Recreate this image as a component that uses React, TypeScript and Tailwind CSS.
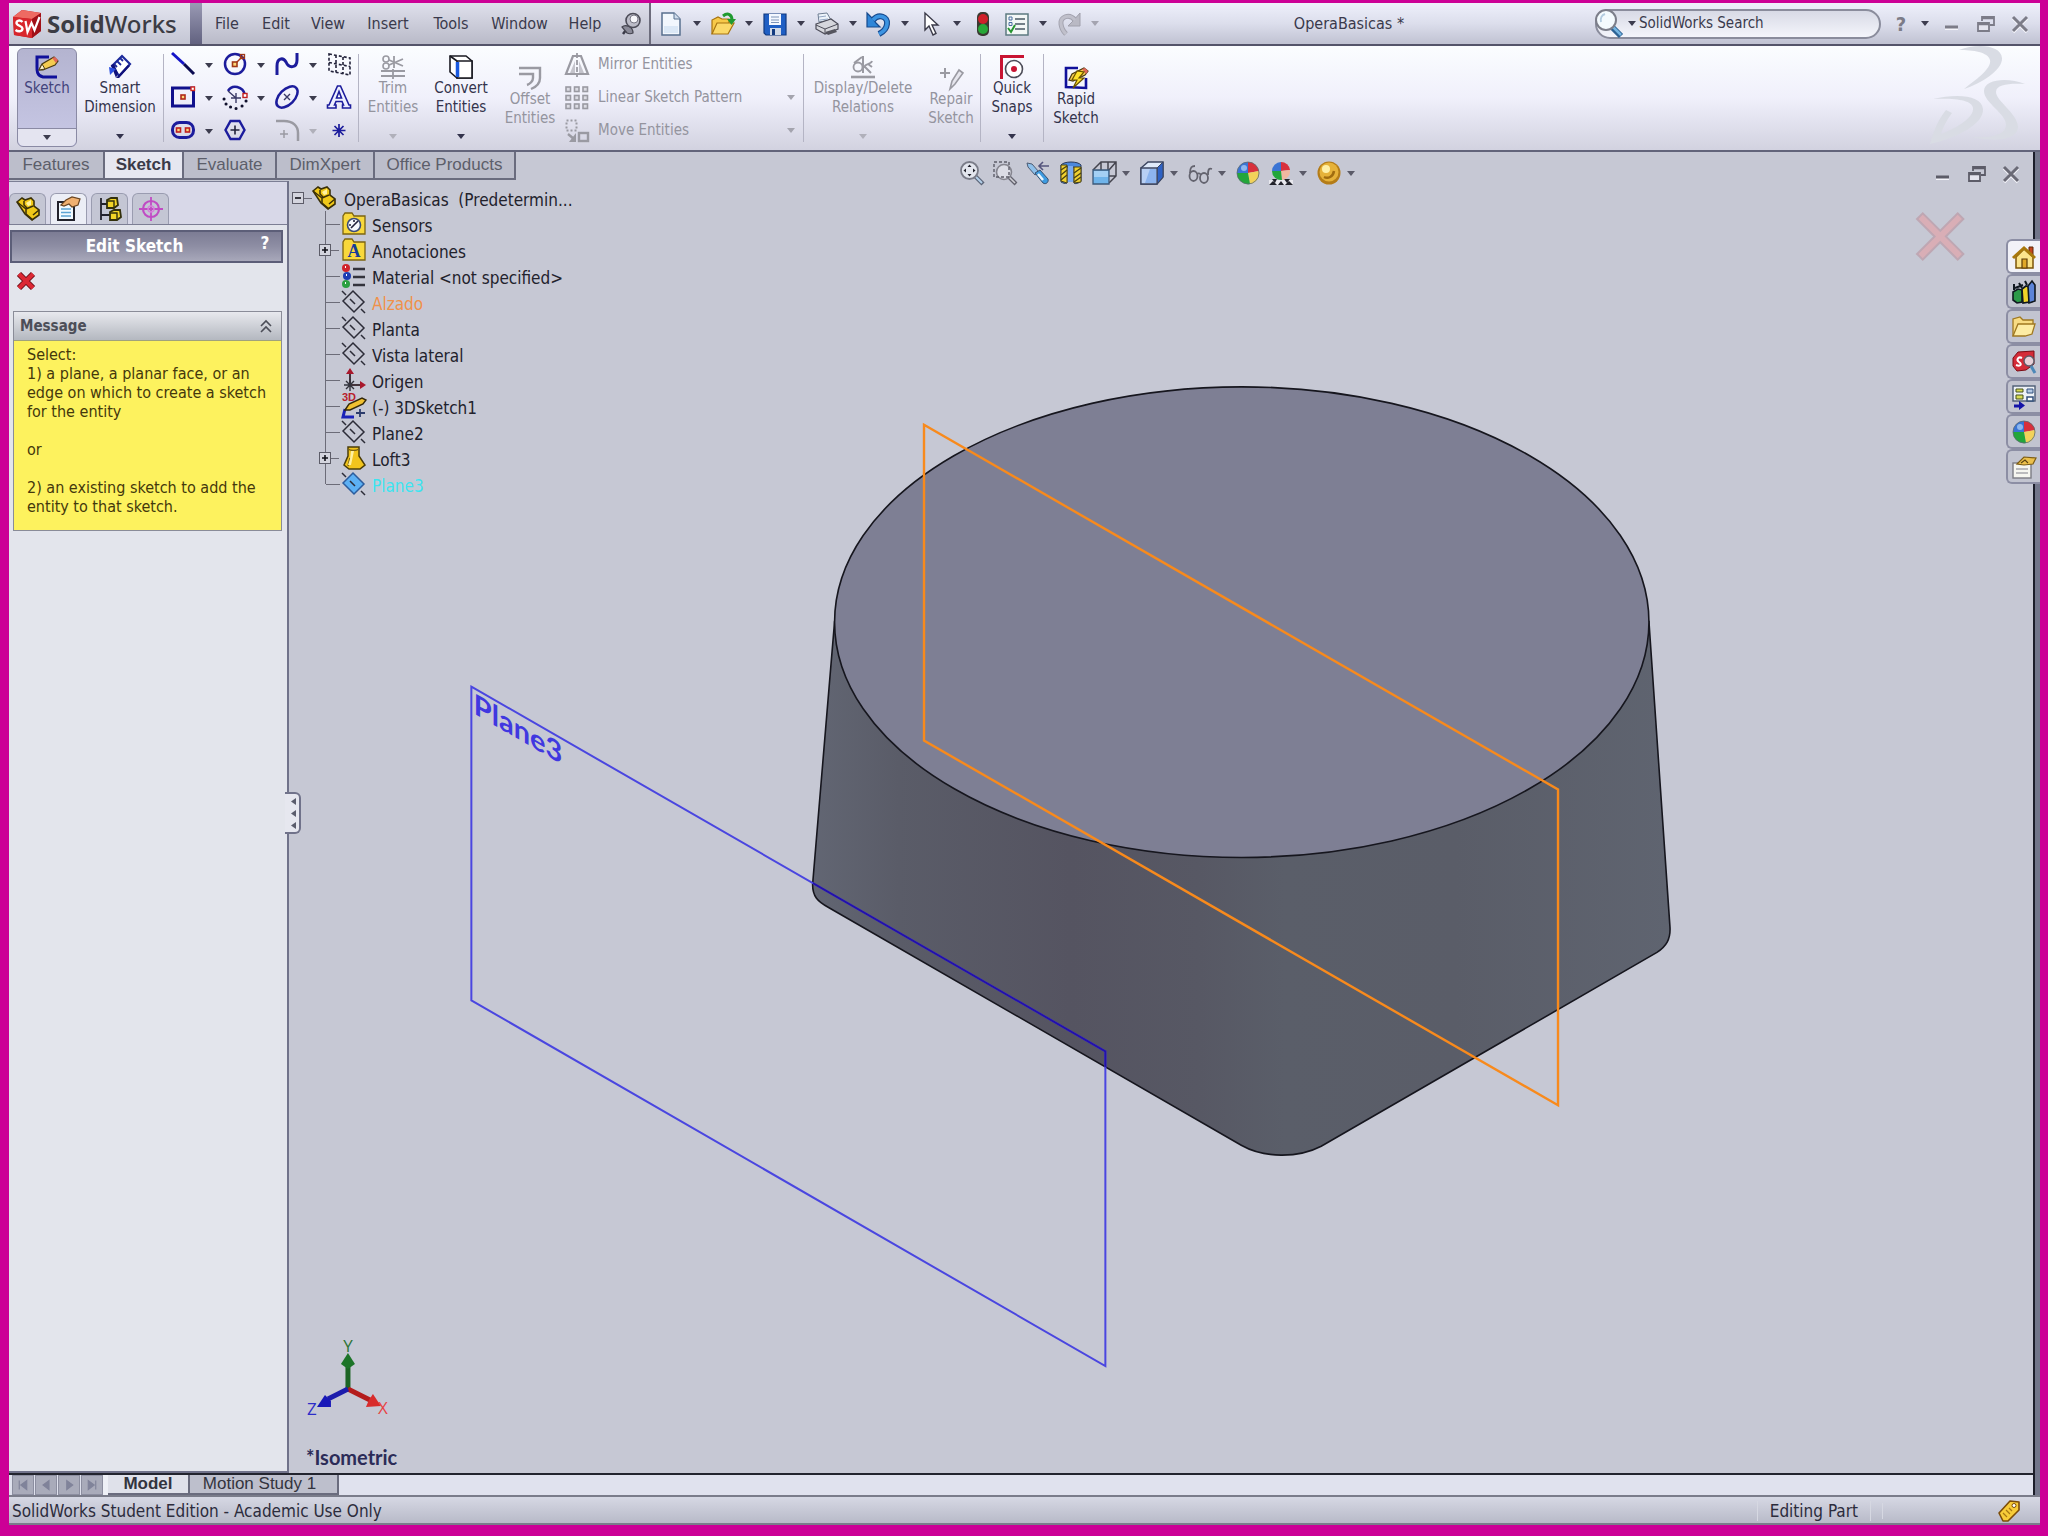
import React from 'react';
import type { ReactNode } from 'react';

const NAVY = '#1c1c9c';
const GREY = '#9a9aa2';

function Svg({ children, size = 'w-6 h-6', box = '0 0 24 24' }: { children: ReactNode; size?: string; box?: string }) {
  return (
    <svg viewBox={box} className={`${size} shrink-0 overflow-visible`} fill="none" aria-hidden="true">
      {children}
    </svg>
  );
}

function Caret({ tone = '#3c3c4e' }: { tone?: string }) {
  return (
    <Svg size="w-2 h-[5px]" box="0 0 8 5">
      <path d="M0 0h8L4 5z" fill={tone} />
    </Svg>
  );
}

/* ---------- title bar icons ---------- */

const CubeLogo = () => (
  <Svg size="w-[30px] h-[30px]" box="0 0 30 30">
    <path d="M1 8 10 1l19 3v18l-9 7L2 26z" fill="#c01820" />
    <path d="M1 8 10 1l19 3-9 6z" fill="#ee6a62" />
    <path d="M20 10l9-6v18l-9 7z" fill="#a01018" />
    <path d="M1 8l19 2v19L2 26z" fill="#d8262c" />
    <path d="M10.500 13c-2.500-2.500-6-1.500-6 1s6 3 6 5.500-3.500 4-7 1.500" stroke="#fff" strokeWidth="2.400" />
    <path d="M13.500 12l2 11 4-9 3 7 5-13" stroke="#fff" strokeWidth="2.200" />
  </Svg>
);

const PinIcon = () => (
  <Svg size="w-5 h-6" box="0 0 20 24">
    <path d="M2 22l6-8" stroke="#3a3a48" strokeWidth="2.500" />
    <path d="M1 15c3-3 11-1 11 6-2 1-4 1-6 0z" fill="#8a8a98" stroke="#44444f" strokeWidth="1.200" />
    <circle cx="12" cy="8.500" r="7" fill="#bcbcc8" stroke="#4c4c58" strokeWidth="1.600" />
    <circle cx="13" cy="7" r="4" fill="#f6f6fa" stroke="#777784" />
  </Svg>
);

const NewIcon = () => (
  <Svg>
    <path d="M3 1h12l6 6v16H3z" fill="#f2f7fd" stroke="#58708f" strokeWidth="1.500" />
    <path d="M15 1v6h6" fill="#cfdcec" stroke="#58708f" />
    <path d="M5 14h14v7H5z" fill="#dbe8f6" />
  </Svg>
);

const OpenIcon = () => (
  <Svg>
    <path d="M1 22V8l6-3 4 2h7v4" fill="#f7c948" stroke="#a87410" strokeWidth="1.200" />
    <path d="M1 22l5-11h17l-6 11z" fill="#fbd968" stroke="#a87410" strokeWidth="1.200" />
    <path d="M12 4c5-4 9-1 9 4" stroke="#1f9a30" strokeWidth="3" />
    <path d="M16 7h9l-4.500 6z" fill="#1f9a30" />
  </Svg>
);

const SaveIcon = () => (
  <Svg>
    <path d="M1 2h22v21H3l-2-2z" fill="#1f5fc4" stroke="#123a80" strokeWidth="1.200" />
    <path d="M6 2h12v11H6z" fill="#f4f8ff" />
    <path d="M8 5h8M8 8h8M8 10.500h8" stroke="#7c94b8" />
    <path d="M7 16h11v7H7z" fill="#cfd8e6" />
    <path d="M9 17h3v6H9z" fill="#123a80" />
  </Svg>
);

const PrintIcon = () => (
  <Svg>
    <path d="M4 10L3 2l9-1 4 7z" fill="#eef4fb" stroke="#6f7f94" />
    <path d="M1 12l15-5 7 5v5l-13 5-9-5z" fill="#d5d6dc" stroke="#4c4c58" strokeWidth="1.200" />
    <path d="M1 13l9 4 13-5M10 17v5" stroke="#4c4c58" />
    <path d="M10 20l10-3 2 3-9 3z" fill="#55555f" />
    <path d="M4 5l7-1M5 8l8-1" stroke="#93a7c4" />
  </Svg>
);

const UndoIcon = () => (
  <Svg>
    <path d="M6 8c6-7 15-3 14 4-.5 5-4 8-8 10" stroke="#174a8e" strokeWidth="6" />
    <path d="M0 1v14h13L9 11 6 7z" fill="#2f86d8" stroke="#174a8e" strokeWidth="1.200" />
    <path d="M6 8c6-7 15-3 14 4-.5 5-4 8-8 10" stroke="#3c94e2" strokeWidth="3.600" />
  </Svg>
);

const RedoIcon = () => (
  <Svg>
    <path d="M18 8C12 1 3 5 4 12c.5 5 3 8 5 10" stroke="#a3a3af" strokeWidth="5" />
    <path d="M23 1v13H11l5-5z" fill="#b9b9c4" stroke="#a0a0ac" />
    <path d="M18 8C12 1 3 5 4 12c.5 5 3 8 5 10" stroke="#c0c0cb" strokeWidth="3" />
  </Svg>
);

const CursorIcon = () => (
  <Svg>
    <path d="M6 1v17l4-4 4 9 3-1.500-4-8.500h6z" fill="#fff" stroke="#3a3a48" strokeWidth="1.400" />
  </Svg>
);

const LightIcon = () => (
  <Svg>
    <rect x="6" y="0" width="12" height="24" rx="5" fill="#3a3a32" />
    <circle cx="12" cy="7" r="5" fill="#d0202a" />
    <circle cx="12" cy="17" r="5" fill="#28a838" />
  </Svg>
);

const ListIcon = () => (
  <Svg>
    <rect x="1" y="2" width="22" height="21" fill="#f3f7f6" stroke="#5c7a80" strokeWidth="1.500" />
    <path d="M10 7h10M10 12h10M10 17h10" stroke="#4a5a64" strokeWidth="1.500" />
    <path d="M4 5h3v3H4zM4 10.500h3v3H4z" stroke="#4a6ea0" />
    <path d="M3 16l3 4 4-7" stroke="#25952f" strokeWidth="2" />
  </Svg>
);

const MinIcon = ({ tone = '#7c7c88' }: { tone?: string }) => (
  <Svg size="w-[18px] h-[18px]" box="0 0 18 18">
    <path d="M2 13h13" stroke="#f4f4fa" strokeWidth="4" />
    <path d="M2 12h13" stroke={tone} strokeWidth="3" />
  </Svg>
);

const RestoreIcon = ({ tone = '#7c7c88' }: { tone?: string }) => (
  <Svg size="w-[18px] h-[18px]" box="0 0 18 18">
    <path d="M5 6V2h12v8h-4" stroke={tone} strokeWidth="1.800" />
    <path d="M5 3h12" stroke={tone} strokeWidth="2.500" />
    <path d="M1 8h11v8H1z" fill="#e4e4ee" stroke={tone} strokeWidth="1.800" />
    <path d="M1 9h11" stroke={tone} strokeWidth="2.500" />
  </Svg>
);

const CloseIcon = ({ tone = '#7c7c88' }: { tone?: string }) => (
  <Svg size="w-[18px] h-[18px]" box="0 0 18 18">
    <path d="M2 3l14 14M16 3L2 17" stroke="#f4f4fa" strokeWidth="3.500" />
    <path d="M2 2l14 14M16 2L2 16" stroke={tone} strokeWidth="3" />
  </Svg>
);

/* ---------- sketch tool icons ---------- */

const SketchIcon = () => (
  <Svg>
    <path d="M14 2H2v8c0 4-1 11 6 12h14" stroke="#10109a" strokeWidth="3" />
    <path d="M4 15l3-6 12-7 4 4-3 4-12 5z" fill="#f4cc50" stroke="#4a3a10" strokeWidth="1.200" />
    <path d="M4 15l3-6 3 5z" fill="#fff4d0" stroke="#4a3a10" />
    <path d="M17 3l4 5 2-3-3-3z" fill="#e0685a" />
  </Svg>
);

const DimensionIcon = () => (
  <Svg>
    <path d="M4 11L14 1l8 8-11 12z" fill="#fff" stroke="#1c2a9c" strokeWidth="2.200" />
    <path d="M12 3l3 3M9 6l4 4M6 9l3 3" stroke="#1c2a9c" strokeWidth="1.800" />
    <path d="M3 10l3-1 4 9-2 5z" fill="#10107a" />
    <path d="M1 12l7 2-6 6z" fill="#2c50e0" />
    <path d="M8 23l12-13 2 1-11 12z" fill="#10107a" />
  </Svg>
);

const LineIcon = () => (
  <Svg>
    <path d="M1 1l12 11" stroke="#1414c8" strokeWidth="3" />
    <path d="M13 12l10 10" stroke="#0a0a50" strokeWidth="3" />
  </Svg>
);

const CircleIcon = () => (
  <Svg>
    <circle cx="12" cy="12" r="10" stroke={NAVY} strokeWidth="2.500" />
    <path d="M12 12l8-8" stroke="#a03818" strokeWidth="1.500" />
    <rect x="9.500" y="10" width="4.500" height="4.500" fill="#fbd77a" stroke="#a03818" strokeWidth="1.600" />
    <rect x="17.500" y="2.500" width="4" height="4" stroke="#a03818" strokeWidth="1.300" />
  </Svg>
);

const SplineIcon = () => (
  <Svg>
    <path d="M2 23V14C2 6 8 5 11 10c3 7 11 6 11-2V1" stroke={NAVY} strokeWidth="3" />
  </Svg>
);

const PlaneGridIcon = () => (
  <Svg>
    <path d="M2 2l21 4v17L2 19zM2 10.500l21 4M9 3v17M16 5v17" stroke="#22223a" strokeWidth="1.600" strokeDasharray="3 2" />
  </Svg>
);

const RectIcon = () => (
  <Svg>
    <rect x="1.500" y="3" width="21" height="18" stroke="#10108c" strokeWidth="3" />
    <rect x="10" y="10" width="4" height="4" fill="#fbd77a" stroke="#b02818" strokeWidth="1.600" />
    <rect x="20" y="2" width="3.500" height="3.500" fill="#fff" stroke="#d02820" strokeWidth="1.400" />
  </Svg>
);

const ArcIcon = () => (
  <Svg>
    <path d="M5 6C9-1 20 1 22 10" stroke={NAVY} strokeWidth="2.600" />
    <path d="M5 6l8 7M13 8v10M8 13h10" stroke="#3a3a66" strokeWidth="1.400" />
    <path d="M1 14h.1M3 19h.1M7.500 22h.1M13 23.500h.1M19 21h.1M23 16h.1" stroke="#10102c" strokeWidth="3" strokeLinecap="round" />
    <rect x="20" y="8.500" width="4" height="4" fill="#fff" stroke="#c02020" strokeWidth="1.400" />
  </Svg>
);

const EllipseIcon = () => (
  <Svg>
    <ellipse cx="12" cy="12" rx="13" ry="7.500" transform="rotate(-45 12 12)" stroke={NAVY} strokeWidth="2.500" />
    <path d="M9 9l6 6M15 9l-6 6" stroke="#3a3a66" strokeWidth="1.400" />
  </Svg>
);

const LetterIcon = () => (
  <Svg>
    <path d="M10.500 1h3L22 20h1.500v3h-8v-3h1l-1.500-3.500H9L7.500 20h1.500v3H.5v-3H2z" fill="#eef0ff" stroke={NAVY} strokeWidth="1.600" />
    <path d="M12 6.500l-2.500 6.500h5z" fill="#fff" stroke={NAVY} strokeWidth="1.600" />
  </Svg>
);

const SlotIcon = () => (
  <Svg>
    <rect x="1.500" y="4.500" width="21" height="15" rx="7" stroke={NAVY} strokeWidth="3" />
    <rect x="5.500" y="10" width="4" height="4" fill="#fbd77a" stroke="#c02020" strokeWidth="1.600" />
    <rect x="14.500" y="10" width="4" height="4" fill="#fbd77a" stroke="#c02020" strokeWidth="1.600" />
  </Svg>
);

const HexIcon = () => (
  <Svg>
    <path d="M7.500 3h9l5 9-5 9h-9l-5-9z" stroke={NAVY} strokeWidth="2.400" />
    <path d="M12 7.500v9M7.500 12h9" stroke="#22223a" strokeWidth="1.600" />
  </Svg>
);

const FilletIcon = () => (
  <Svg>
    <path d="M1 3h8c9 0 14 5 14 12v8" stroke={GREY} strokeWidth="2.500" />
    <path d="M9 12v8M5 16h8" stroke={GREY} strokeWidth="1.500" />
  </Svg>
);

const PointIcon = () => (
  <Svg>
    <path d="M12 6v13M5.500 12.500h13M7.500 8l9 9M16.500 8l-9 9" stroke={NAVY} strokeWidth="1.700" />
  </Svg>
);

const TrimIcon = () => (
  <Svg>
    <path d="M0 16h24M0 21h24M12 14v10" stroke={GREY} strokeWidth="1.800" />
    <circle cx="5" cy="4" r="3" stroke={GREY} strokeWidth="1.600" />
    <circle cx="5" cy="11" r="3" stroke={GREY} strokeWidth="1.600" />
    <path d="M8 5l14 6M8 10l14-6M13 1v12" stroke={GREY} strokeWidth="1.800" />
  </Svg>
);

const ConvertIcon = () => (
  <Svg>
    <path d="M1 1h16l6 5v17H8l-7-6z" fill="#fff" stroke="#1a1a22" strokeWidth="1.600" />
    <path d="M8 6v17h15V6z" fill="#fff" stroke="#1a1a22" strokeWidth="1.600" />
    <path d="M1 1l7 5" stroke="#1a1a22" strokeWidth="1.600" />
    <path d="M8.500 7v15" stroke="#1a5ae0" strokeWidth="3.500" />
  </Svg>
);

const OffsetIcon = () => (
  <Svg>
    <path d="M1 2h21v10c0 5-4 9-9 11M1 8h14v4c0 3-3 6-6 7" stroke={GREY} strokeWidth="2.400" />
  </Svg>
);

const MirrorIcon = () => (
  <Svg>
    <path d="M8 3L1 21h22L16 3z" stroke={GREY} strokeWidth="2.200" />
    <path d="M12 0v24" stroke={GREY} strokeWidth="1.800" strokeDasharray="5 2" />
    <path d="M5 20h5V8zM19 20h-5V8z" fill="#c4c4cc" />
  </Svg>
);

const PatternIcon = () => (
  <Svg>
    {[2, 10.500, 19].map((y) =>
      [2, 10.500, 19].map((x) => <rect key={`${x}-${y}`} x={x - 1} y={y - 1} width="4.500" height="4.500" fill="#dcdce4" stroke={GREY} strokeWidth="1.600" />),
    )}
  </Svg>
);

const MoveIcon = () => (
  <Svg>
    <rect x="1.500" y="1.500" width="10" height="10" stroke={GREY} strokeWidth="2" strokeDasharray="2 2" />
    <rect x="14" y="14" width="9" height="8" stroke={GREY} strokeWidth="2.400" />
    <path d="M3 15l6 5" stroke={GREY} strokeWidth="2.400" />
    <path d="M11 14v9H4z" fill={GREY} />
  </Svg>
);

const RelationsIcon = () => (
  <Svg>
    <path d="M0 22h24" stroke={GREY} strokeWidth="2.600" />
    <circle cx="7" cy="12" r="4.500" stroke={GREY} strokeWidth="1.800" />
    <path d="M12 1v17M3 8l8-6M12 13c4-6 8-3 9-7M13 11l7 7M17 9l4 3" stroke={GREY} strokeWidth="2" />
  </Svg>
);

const RepairIcon = () => (
  <Svg>
    <path d="M1 7h10M6 2v10" stroke={GREY} strokeWidth="2" />
    <path d="M11 23l2-8 7-11 4 3-8 11z" fill="#e6e6ee" stroke={GREY} strokeWidth="1.600" />
  </Svg>
);

const SnapsIcon = () => (
  <Svg>
    <path d="M1.500 24V1.500H24" stroke="#c81432" strokeWidth="3" />
    <circle cx="14" cy="14" r="8.500" fill="#fff" stroke="#4c4c58" strokeWidth="1.600" />
    <circle cx="14" cy="14" r="3" fill="#c81432" />
  </Svg>
);

const RapidIcon = () => (
  <Svg>
    <path d="M14 2H2v19l20 1V12" stroke="#10109a" strokeWidth="2.600" />
    <path d="M5 14l3-6 12-6 4 3-3 4-12 6z" fill="#f4cc50" stroke="#4a3a10" strokeWidth="1.200" />
    <path d="M18 3l4 5 2-3-3-3z" fill="#e0685a" />
    <path d="M13 5L8 14h5l-4 8 11-10h-5l5-6z" fill="#ffe12a" stroke="#6a5200" strokeWidth="1.200" />
  </Svg>
);

/* ---------- view toolbar icons ---------- */

const ZoomFitIcon = () => (
  <Svg>
    <path d="M15 15l8 8" stroke="#5c6578" strokeWidth="4.500" />
    <path d="M15 15l7 7" stroke="#b4d0ea" strokeWidth="2" />
    <circle cx="9.500" cy="9.500" r="8.500" fill="#e3e6ee" stroke="#7a7c88" strokeWidth="1.800" />
    <path d="M9.500 3.500l2 2.500h-4zM9.500 15.500l2-2.500h-4zM3.500 9.500l2.500-2v4zM15.500 9.500L13 7.500v4z" fill="#22222c" />
  </Svg>
);

const ZoomAreaIcon = () => (
  <Svg>
    <path d="M15 15l8 8" stroke="#63636e" strokeWidth="4" />
    <path d="M15 15l7 7" stroke="#cfcfd6" strokeWidth="1.600" />
    <circle cx="11" cy="11" r="7.500" fill="#dcdde6" stroke="#85858f" strokeWidth="1.600" />
    <path d="M1 1h15v15H1z" stroke="#5c5c68" strokeWidth="1.400" strokeDasharray="3 2" />
  </Svg>
);

const PrevViewIcon = () => (
  <Svg>
    <path d="M1 2l5 1 7 8-4 3-7-8z" fill="#8ec0ea" stroke="#4c5c74" />
    <path d="M9 12l5-3 8 9c1 3-2 6-5 4z" fill="#3d9be0" stroke="#38506e" />
    <path d="M12 13l5 6" stroke="#e8f6ff" strokeWidth="2.500" />
    <path d="M13 5h10M17 1l-4 4 4 4" stroke="#54547c" strokeWidth="1.600" />
  </Svg>
);

const SectionIcon = () => (
  <Svg>
    <path d="M2 4c3-4 17-4 20 0v16c-3 3-6 3-7 2V6H8v16c-2 1-4 0-6-1z" fill="#4c88dc" stroke="#2a3a5c" />
    <path d="M2 4h6v18l-6-2zM15 6h7v15l-7 1z" fill="#f0d030" stroke="#4a4210" />
    <path d="M2 9l6-4M2 14l6-5M2 19l6-5M15 12l7-5M15 17l7-5M15 21l7-5" stroke="#4a4210" strokeWidth="1.300" />
    <path d="M9 5h5v16H9z" fill="#7cacf0" />
  </Svg>
);

const OrientIcon = () => (
  <Svg>
    <path d="M1 9L9 1h15v14l-7 7M9 1v8M16 1v8M24 1l-7 8M17 15h7" stroke="#44444e" strokeWidth="1.500" />
    <path d="M1 9h16v14H1z" fill="#6fb4ea" stroke="#3c5878" strokeWidth="1.300" />
    <path d="M2 10h14v6H2z" fill="#a4d0f4" />
  </Svg>
);

const DisplayIcon = () => (
  <Svg>
    <path d="M1 7l7-6h15v15l-6 7H1z" fill="#dfeafa" stroke="#3c4660" strokeWidth="1.500" />
    <path d="M17 7l6-6v15l-6 7z" fill="#2e62c4" stroke="#3c4660" />
    <path d="M1 7h16v16H1z" fill="#b8d0f4" stroke="#3c4660" strokeWidth="1.300" />
    <path d="M10 8h6v14H5z" fill="#8cb4ee" />
  </Svg>
);

const GlassesIcon = () => (
  <Svg>
    <ellipse cx="5.500" cy="15" rx="4" ry="5" stroke="#63636e" strokeWidth="1.800" />
    <ellipse cx="16" cy="17" rx="4" ry="5" stroke="#63636e" strokeWidth="1.800" />
    <path d="M9 13c1-1 3-1 4 1M2 12C2 6 4 5 7 5M20 14c0-6 1-7 4-6" stroke="#63636e" strokeWidth="1.800" />
  </Svg>
);

const BallIcon = ({ size }: { size?: string }) => (
  <Svg size={size}>
    <path d="M12 12V1a11 11 0 0 1 11 9z" fill="#d8303c" />
    <path d="M12 12l11-2a11 11 0 0 1-9 13z" fill="#f2d25a" />
    <path d="M12 12l2 11A11 11 0 0 1 1 12z" fill="#23a63a" />
    <path d="M12 12H1A11 11 0 0 1 12 1z" fill="#3a74d4" />
    <circle cx="8" cy="7" r="3" fill="#a4c8f4" opacity=".8" />
    <circle cx="12" cy="12" r="11" stroke="#5a6a70" strokeWidth=".8" />
  </Svg>
);

const SceneIcon = () => (
  <Svg>
    <path d="M0 19h24v5H0z" fill="#e8e8ee" />
    <path d="M0 24l4-4 4 4zM9 24l3-4 3 4zM16 24l4-4 4 4zM3 18h5l-2 4zM15 18h6l-3 4z" fill="#22222a" />
    <path d="M12 10V1a9 9 0 0 1 9 8z" fill="#d8303c" />
    <path d="M12 10l9-1a9 9 0 0 1-8 10z" fill="#f0b8a0" />
    <path d="M12 10l1 9a9 9 0 0 1-10-9z" fill="#23a63a" />
    <path d="M12 10H3a9 9 0 0 1 9-9z" fill="#3a74d4" />
  </Svg>
);

const GoldIcon = () => (
  <Svg>
    <circle cx="12" cy="12" r="11.500" fill="#b47c18" />
    <circle cx="12" cy="11" r="9.500" fill="#e6b23a" />
    <circle cx="9" cy="8" r="4" fill="#fff0a8" />
    <path d="M7 16c4 2 9 0 10-6" stroke="#a06c10" strokeWidth="2.500" />
  </Svg>
);

/* ---------- tree and pane icons ---------- */

const PartIcon = ({ size }: { size?: string }) => (
  <Svg size={size}>
    <path d="M1 5l5-4 3 2 6-2 3 3v5l5 4v5l-7 5-7-6z" fill="#f0c818" stroke="#3a3008" strokeWidth="1.600" />
    <path d="M1 5l9 7v5l7 6M10 12l7-3M17 18l6-5M8 4v4l3 3" stroke="#3a3008" strokeWidth="1.500" />
    <path d="M10 6l5-3v5l-3 1z" fill="#fff3a0" />
  </Svg>
);

const FolderBase = () => <path d="M1 22V4l2-3h7l2 3h11v18z" fill="#f8d83c" stroke="#7c6410" strokeWidth="1.300" />;

const SensorsIcon = () => (
  <Svg>
    <FolderBase />
    <circle cx="12" cy="13" r="6.500" fill="#f6f8fc" stroke="#3c4c78" strokeWidth="1.600" />
    <path d="M9 16l7-7M12 8v2M7 13h2" stroke="#22223a" strokeWidth="1.600" />
  </Svg>
);

const NotesIcon = () => (
  <Svg>
    <FolderBase />
    <text x="12" y="19" textAnchor="middle" fontSize="18" fontWeight="700" fontFamily="Liberation Serif, serif" fill="#163c98">
      A
    </text>
  </Svg>
);

const MaterialIcon = () => (
  <Svg>
    <circle cx="4" cy="4" r="4" fill="#d0242c" />
    <circle cx="5" cy="12" r="4" fill="#1c3cb4" />
    <circle cx="4" cy="20" r="4" fill="#2aa040" />
    <path d="M3 3h1M4 11h1M3 19h1" stroke="#fff" strokeWidth="2" />
    <path d="M11 5h12M11 13h12M11 21h12" stroke="#33333c" strokeWidth="2.500" />
  </Svg>
);

const PlaneIcon = ({ fill = 'none' }: { fill?: string }) => (
  <Svg>
    <path d="M1 11L11 1l11 11-10 10z" fill={fill} stroke={fill === 'none' ? '#2c2c38' : '#2c5c9c'} strokeWidth="1.500" />
    <path d="M0 1l4 4M8 9l5 5M19 19l4 4" stroke="#2c2c38" strokeWidth="1.500" />
  </Svg>
);

const OriginIcon = () => (
  <Svg>
    <path d="M8 17V3M8 17h13" stroke="#44343c" strokeWidth="2" />
    <path d="M8 0l4 6H4zM24 17l-6-4v8z" fill="#a8182c" />
    <path d="M4 13l8 8M12 13l-8 8M8 11v12M2 17h6" stroke="#33333c" strokeWidth="1.400" />
  </Svg>
);

const Sketch3DIcon = () => (
  <Svg>
    <text x="0" y="7" fontSize="11" fontWeight="700" fontFamily="Liberation Sans, sans-serif" fill="#b8202c">
      3D
    </text>
    <path d="M3 15L1 23h11" stroke="#1a22b8" strokeWidth="3" />
    <path d="M14 19h9M18 15v8" stroke="#2c3c6c" strokeWidth="1.800" />
    <path d="M3 16l4-6 13-6 4 2-3 4-13 6z" fill="#f0c030" stroke="#33280a" strokeWidth="1.400" />
  </Svg>
);

const LoftIcon = () => (
  <Svg>
    <path d="M6 1h11v9l6 9-5 4H7l-5-4 4-9z" fill="#f2c41c" stroke="#4a3c08" strokeWidth="1.500" />
    <path d="M6 3c3 2 8 2 11 0M8 12l-2 8" stroke="#7c6410" strokeWidth="1.500" />
    <path d="M9 5l-1 8-2 6h3l3-14z" fill="#fff0a0" />
  </Svg>
);

const PropertyIcon = () => (
  <Svg>
    <rect x="1" y="5" width="16" height="18" fill="#f2faff" stroke="#22222c" strokeWidth="2" />
    <path d="M4 12h10M4 15.500h10M4 19h10" stroke="#5ca4d4" strokeWidth="1.400" />
    <path d="M4 8l5-5 6-3 8 2-2 6-6 2-3-3-5 2z" fill="#f0b070" stroke="#6a4420" strokeWidth="1.200" />
  </Svg>
);

const ConfigIcon = () => (
  <Svg>
    <path d="M3 1v22M3 7h7M3 18h9" stroke="#22222c" strokeWidth="1.800" />
    <path d="M9 3l4-2h6l1 7-4 3h-7zM12 15l4-2h6l1 7-4 3h-7z" fill="#f2d428" stroke="#33300c" strokeWidth="1.800" />
    <path d="M9 4h7v6M12 16h7v6" stroke="#33300c" strokeWidth="1.400" />
  </Svg>
);

const TargetIcon = () => (
  <Svg>
    <circle cx="12" cy="12" r="8" stroke="#c04cc4" strokeWidth="2.200" />
    <path d="M12 0v24M0 12h24" stroke="#c04cc4" strokeWidth="1.800" />
    <circle cx="12" cy="12" r="3" stroke="#d880dc" strokeWidth="1.500" />
  </Svg>
);

const HomeIcon = () => (
  <Svg>
    <path d="M17 2h4v8h-4z" fill="#c4441c" stroke="#5c2808" />
    <path d="M4 12v11h17V12l-9-8z" fill="#fbe48c" stroke="#7c5408" strokeWidth="1.500" />
    <path d="M1 13L12 3l11 10" stroke="#a8780c" strokeWidth="3" />
    <path d="M10 14h5v9h-5z" fill="#e0a828" stroke="#5c3c08" strokeWidth="1.200" />
  </Svg>
);

const LibraryIcon = () => (
  <Svg>
    <path d="M1 12l5-3 4 1v12l-5 1-4-3z" fill="#2c9a48" stroke="#101820" strokeWidth="1.600" />
    <path d="M10 9l4-3 3 1v15l-6 1z" fill="#f0d428" stroke="#101820" strokeWidth="1.600" />
    <path d="M16 6l4-5 3 4v16l-6 2z" fill="#5c84d8" stroke="#101820" strokeWidth="1.600" />
    <path d="M2 4v6M7 3l3 5M13 1l2 4M3 8l8-3" stroke="#101820" strokeWidth="2" />
  </Svg>
);

const FolderIcon = () => (
  <Svg>
    <path d="M1 21V4l7-2 3 3h10v4" fill="#f8dc84" stroke="#a07820" strokeWidth="1.300" />
    <path d="M1 21L6 9h17l-3 10-7 2z" fill="#fdeca4" stroke="#a07820" strokeWidth="1.300" />
  </Svg>
);

const SearchCubeIcon = () => (
  <Svg>
    <path d="M1 8l5-6 16-1v13l-8 6-9 1-4-5z" fill="#d42c38" stroke="#7c0c14" />
    <path d="M10 8c-4-2-6 2-3 4s2 5-3 3" stroke="#fff" strokeWidth="2" />
    <circle cx="17" cy="11" r="5" fill="#e8d0d8" stroke="#5c5c68" strokeWidth="1.400" />
    <path d="M19 16l4 7" stroke="#4c88b8" strokeWidth="3" />
  </Svg>
);

const PaletteIcon = () => (
  <Svg>
    <rect x="1" y="1" width="22" height="15" fill="#eef2f6" stroke="#4c5c74" strokeWidth="1.400" />
    <path d="M4 4h7v3H4zM4 10h7v4H4z" fill="#d8dc54" stroke="#44501c" />
    <path d="M15 4h6v4h-6z" fill="#b4c8e4" stroke="#33507c" />
    <path d="M15 12h6v4h-6z" fill="#fff" stroke="#33507c" strokeWidth="1.500" />
    <path d="M2 21h8" stroke="#1414a8" strokeWidth="3" />
    <path d="M7 16v9l6-4.500z" fill="#1414a8" />
  </Svg>
);

const CardIcon = () => (
  <Svg>
    <rect x="1" y="8" width="18" height="15" fill="#f6f6f0" stroke="#7c7c84" strokeWidth="1.400" />
    <path d="M4 14h12M4 18h12" stroke="#a8a8ac" strokeWidth="1.300" />
    <path d="M5 9l7-7 12 1-3 6-9 1z" fill="#ecc04c" stroke="#7c5c14" strokeWidth="1.200" />
    <path d="M9 8l4-3 3 3" stroke="#5c4410" strokeWidth="1.200" />
  </Svg>
);

const TagIcon = () => (
  <Svg size="w-[22px] h-[22px]" box="0 0 22 22">
    <path d="M1 13L12 1l9 1v8L10 21H5z" fill="#f8cc38" stroke="#7c4c08" strokeWidth="1.600" strokeLinejoin="round" />
    <circle cx="16" cy="5.500" r="2" fill="#fff" stroke="#7c4c08" />
    <path d="M5 13l4 4M8 10l4 4M11 8l3 3" stroke="#a87814" strokeWidth="1.200" />
  </Svg>
);

/* ---------- bars ---------- */

const menus: [string, string][] = [
  ['File', 'w-[50px]'],
  ['Edit', 'w-12'],
  ['View', 'w-14'],
  ['Insert', 'w-16'],
  ['Tools', 'w-[62px]'],
  ['Window', 'w-[75px]'],
  ['Help', 'w-14'],
];

const quickTools: [string, ReactNode, string][] = [
  ['New', <NewIcon />, '#3c3c4e'],
  ['Open', <OpenIcon />, '#3c3c4e'],
  ['Save', <SaveIcon />, '#3c3c4e'],
  ['Print', <PrintIcon />, '#3c3c4e'],
  ['Undo', <UndoIcon />, '#3c3c4e'],
  ['Select', <CursorIcon />, '#3c3c4e'],
  ['Rebuild', <LightIcon />, ''],
  ['Options', <ListIcon />, '#3c3c4e'],
  ['Redo', <RedoIcon />, '#a4a4b0'],
];

function TitleBar() {
  return (
    <header className="flex h-[41px] shrink-0 items-stretch bg-linear-to-b from-[#eef0fb] via-[#dcdeec] to-[#c0c2d2] text-[16px] text-[#3a3a4c]">
      <div className="flex w-[181px] items-center gap-1 bg-linear-to-b from-[#e4e5f0] to-[#c4c6d4] pl-[3px]">
        <CubeLogo />
        <span className="pl-px font-['Noto_Sans'] text-[24px] leading-6 text-[#3c3c44]">
          <b>Solid</b>
          <span className="font-medium">Works</span>
        </span>
      </div>
      <div className="w-3 bg-linear-to-b from-[#9a9ab4] to-[#626280]" />
      <nav className="flex w-[449px] items-center border-r-2 border-[#6c6c7c] bg-linear-to-b from-[#dfe0ec] to-[#b9bac8]">
        {menus.map(([label, width]) => (
          <button key={label} className={`${width} h-full pt-px text-center`}>
            {label}
          </button>
        ))}
        <button aria-label="Pin menu" className="ml-2">
          <PinIcon />
        </button>
      </nav>
      <div className="flex items-center pl-[6px]">
        {quickTools.map(([label, icon, tone]) => (
          <div key={label} className={tone ? 'flex w-[52px] items-center' : 'flex w-[34px] items-center'}>
            <button aria-label={label} className="flex w-7 justify-center">
              {icon}
            </button>
            {tone && (
              <button aria-label={`${label} menu`} className="flex h-6 w-6 items-center justify-center">
                <Caret tone={tone} />
              </button>
            )}
          </div>
        ))}
      </div>
      <h1 className="flex-1 self-center pt-px pl-6 text-center">OperaBasicas *</h1>
      <div className="flex w-[473px] items-center pl-7">
        <div className="flex h-[30px] w-[286px] items-center rounded-full border-2 border-[#8a8c9c] bg-linear-to-b from-[#d8dae6] to-[#f4f5fb]">
          <div className="-ml-1">
            <Svg size="w-8 h-8" box="0 0 32 32">
              <path d="M19 19l9 9" stroke="#2c6294" strokeWidth="6" />
              <path d="M19 18l9 9" stroke="#74b4e0" strokeWidth="2.500" />
              <circle cx="13" cy="12" r="10" fill="#f4fafe" stroke="#7c7e8a" strokeWidth="2" />
              <path d="M8 14c-1-4 1-7 4-8" stroke="#b4cce0" strokeWidth="2" />
            </Svg>
          </div>
          <button aria-label="Search options" className="px-[3px]">
            <Caret />
          </button>
          <input aria-label="SolidWorks Search" defaultValue="SolidWorks Search" className="min-w-0 flex-1 bg-transparent text-[15px] outline-none" />
        </div>
        <button aria-label="Help" className="ml-3 w-4 text-[20px] leading-6 font-bold text-[#7c7c88]">
          ?
        </button>
        <button aria-label="Help menu" className="ml-3">
          <Caret />
        </button>
        <button aria-label="Minimize" className="ml-[14px]">
          <MinIcon />
        </button>
        <button aria-label="Restore" className="ml-4">
          <RestoreIcon />
        </button>
        <button aria-label="Close" className="ml-4">
          <CloseIcon />
        </button>
      </div>
    </header>
  );
}

function Divider() {
  return <div className="my-2 w-px shrink-0 bg-[#b4b4c4]" />;
}

function BigTool({ icon, lines, width, low = false, off = false, arrow = false }: { icon: ReactNode; lines: string[]; width: string; low?: boolean; off?: boolean; arrow?: boolean }) {
  return (
    <div className={`${width} ${low ? 'pt-5' : 'pt-[9px]'} ${off ? 'text-[#94949e]' : 'text-[#33334c]'} flex shrink-0 flex-col items-center`}>
      <button disabled={off} className="flex flex-col items-center text-center leading-[19px]">
        {icon}
        {lines.map((line) => (
          <span key={line} className="whitespace-nowrap">
            {line}
          </span>
        ))}
      </button>
      {arrow && (
        <button aria-label={`${lines.join(' ')} menu`} disabled={off} className="mt-auto mb-[6px] flex h-4 items-center">
          <Caret tone={off ? '#b0b0ba' : '#33334c'} />
        </button>
      )}
    </div>
  );
}

const sketchTools: [string, ReactNode, string][] = [
  ['Line', <LineIcon />, '#3c3c4e'],
  ['Circle', <CircleIcon />, '#3c3c4e'],
  ['Spline', <SplineIcon />, '#3c3c4e'],
  ['Plane', <PlaneGridIcon />, ''],
  ['Rectangle', <RectIcon />, '#3c3c4e'],
  ['Arc', <ArcIcon />, '#3c3c4e'],
  ['Ellipse', <EllipseIcon />, '#3c3c4e'],
  ['Text', <LetterIcon />, ''],
  ['Slot', <SlotIcon />, '#3c3c4e'],
  ['Polygon', <HexIcon />, ''],
  ['Fillet', <FilletIcon />, '#b0b0ba'],
  ['Point', <PointIcon />, ''],
];

const rowTools: [string, ReactNode, boolean][] = [
  ['Mirror Entities', <MirrorIcon />, false],
  ['Linear Sketch Pattern', <PatternIcon />, true],
  ['Move Entities', <MoveIcon />, true],
];

function Ribbon() {
  return (
    <div className="flex h-[106px] shrink-0 border-t-2 border-[#54546a] bg-linear-to-b from-[#fbfdff] via-[#f0f0fb] to-[#d2d2e0] pl-2 text-[15px]">
      <div className="mt-[2px] mb-[3px] flex w-[60px] flex-col rounded-md border border-[#8a8aa4] bg-linear-to-b from-[#b4b4d0] to-[#c8c8e6] text-[#44447c]">
        <button className="flex flex-1 flex-col items-center pt-[6px] leading-[19px]">
          <SketchIcon />
          Sketch
        </button>
        <button aria-label="Sketch menu" className="flex h-[18px] items-center justify-center rounded-b-md border-t border-[#8a8aa4] bg-[#e4e4f0]">
          <Caret />
        </button>
      </div>
      <BigTool icon={<DimensionIcon />} lines={['Smart', 'Dimension']} width="w-[86px]" arrow />
      <Divider />
      <div className="grid w-[194px] shrink-0 grid-cols-[52px_52px_52px_28px] grid-rows-[33px_33px_33px] pt-px pl-[6px]">
        {sketchTools.map(([label, icon, tone]) => (
          <div key={label} className="flex items-center">
            <button aria-label={label} className="flex w-[26px] justify-center">
              {icon}
            </button>
            {tone && (
              <button aria-label={`${label} menu`} className="flex h-6 w-[26px] items-center justify-center pt-1">
                <Caret tone={tone} />
              </button>
            )}
          </div>
        ))}
      </div>
      <Divider />
      <BigTool icon={<TrimIcon />} lines={['Trim', 'Entities']} width="w-[68px]" off arrow />
      <BigTool icon={<ConvertIcon />} lines={['Convert', 'Entities']} width="w-[68px]" arrow />
      <BigTool icon={<OffsetIcon />} lines={['Offset', 'Entities']} width="w-[70px]" low off />
      <div className="flex w-[238px] shrink-0 flex-col pt-[2px] text-[#94949e]">
        {rowTools.map(([label, icon, arrow]) => (
          <div key={label} className="flex h-[33px] items-center justify-between pr-2">
            <button disabled className="flex items-center gap-[9px]">
              {icon}
              {label}
            </button>
            {arrow && (
              <button disabled aria-label={`${label} menu`}>
                <Caret tone="#a4a4ae" />
              </button>
            )}
          </div>
        ))}
      </div>
      <Divider />
      <BigTool icon={<RelationsIcon />} lines={['Display/Delete', 'Relations']} width="w-[118px]" off arrow />
      <BigTool icon={<RepairIcon />} lines={['Repair', 'Sketch']} width="w-[58px]" low off />
      <Divider />
      <BigTool icon={<SnapsIcon />} lines={['Quick', 'Snaps']} width="w-[62px]" arrow />
      <Divider />
      <BigTool icon={<RapidIcon />} lines={['Rapid', 'Sketch']} width="w-[64px]" low />
      <div className="ml-auto pr-3">
        <Svg size="w-[98px] h-[100px]" box="0 0 98 100">
          <path d="M29 4c18-7 42-5 43 8 1 12-22 26-38 31 10-8 28-20 26-29-2-8-17-10-31-10z" fill="#d9dce4" />
          <path d="M3 53c26-6 49-3 50 10 1 15-26 29-53 35 4-14 8-24 16-34l6 3c-6 8-9 15-11 21 18-7 33-17 32-26-1-8-18-10-40-9z" fill="#d9dce4" />
          <path d="M95 38c-14-1-29 0-29 8 0 9 22 22 22 35 0 12-22 16-46 10 22 1 34-3 34-12 0-12-22-22-22-34 0-12 24-14 41-7z" fill="#d9dce4" />
        </Svg>
      </div>
    </div>
  );
}

const commandTabs: [string, string][] = [
  ['Features', 'w-24'],
  ['Sketch', 'w-[79px]'],
  ['Evaluate', 'w-[93px]'],
  ['DimXpert', 'w-[98px]'],
  ['Office Products', 'w-[141px]'],
];

const viewTools: [string, ReactNode, boolean][] = [
  ['Zoom to fit', <ZoomFitIcon />, false],
  ['Zoom to area', <ZoomAreaIcon />, false],
  ['Previous view', <PrevViewIcon />, false],
  ['Section view', <SectionIcon />, false],
  ['View orientation', <OrientIcon />, true],
  ['Display style', <DisplayIcon />, true],
  ['Hide or show items', <GlassesIcon />, true],
  ['Edit appearance', <BallIcon />, false],
  ['Apply scene', <SceneIcon />, true],
  ['View settings', <GoldIcon />, true],
];

function TabRow() {
  return (
    <div className="z-10 flex h-[29px] shrink-0 items-start bg-[#c6c8d4]">
      <div role="tablist" className="flex font-['Liberation_Sans'] text-[17px] leading-[26px] text-[#5c5e6a]">
        {commandTabs.map(([label, width]) => (
          <button
            key={label}
            role="tab"
            aria-selected={label === 'Sketch'}
            className={`${width} h-7 border-r-2 border-b-2 border-[#6a6c7e] ${label === 'Sketch' ? 'bg-[#e6e7f0] font-bold text-[#3a3a48]' : 'bg-[#bcbecb]'}`}
          >
            {label}
          </button>
        ))}
      </div>
      <div className="ml-[444px] flex pt-[9px]">
        {viewTools.map(([label, icon, arrow]) => (
          <div key={label} className={arrow ? 'flex w-12 items-center' : 'flex w-[33px] items-center'}>
            <button aria-label={label}>{icon}</button>
            {arrow && (
              <button aria-label={`${label} menu`} className="flex h-6 w-5 items-center justify-center">
                <Caret tone="#5a5a68" />
              </button>
            )}
          </div>
        ))}
      </div>
      <div className="ml-auto flex gap-4 pt-[13px] pr-[13px]">
        <button aria-label="Minimize document">
          <MinIcon tone="#5c5c68" />
        </button>
        <button aria-label="Restore document">
          <RestoreIcon tone="#5c5c68" />
        </button>
        <button aria-label="Close document">
          <CloseIcon tone="#6a6a76" />
        </button>
      </div>
    </div>
  );
}

/* ---------- property pane ---------- */

const paneTabs: [string, ReactNode][] = [
  ['Feature tree', <PartIcon />],
  ['Properties', <PropertyIcon />],
  ['Configurations', <ConfigIcon />],
  ['Dimensions', <TargetIcon />],
];

function PropertyPane() {
  return (
    <aside className="relative flex w-[280px] shrink-0 flex-col border-r-2 border-b-2 border-[#70728a] bg-[#e3e5ec] pr-1">
      <div role="tablist" className="-mr-1 flex h-11 items-end gap-1 border-t border-b border-[#7c7e94] bg-[#d8d8e8]">
        {paneTabs.map(([label, icon]) => (
          <button
            key={label}
            role="tab"
            aria-label={label}
            aria-selected={label === 'Properties'}
            className={`flex h-[31px] w-[37px] items-center justify-center rounded-t-md border border-b-0 border-[#9a9cb0] ${label === 'Properties' ? 'bg-[#eceef6]' : 'bg-[#c4c6d4]'}`}
          >
            {icon}
          </button>
        ))}
      </div>
      <div className="mt-[5px] ml-px flex h-[33px] items-center border-2 border-[#5c5e78] bg-linear-to-b from-[#7c7c94] via-[#8e8ea4] to-[#a8a8ba] text-[17px] font-bold text-white">
        <h2 className="flex-1 pl-2 text-center">Edit Sketch</h2>
        <button aria-label="Help" className="w-8 pb-2 leading-5">
          ?
        </button>
      </div>
      <button aria-label="Cancel" className="mt-2 ml-[7px] w-5">
        <Svg size="w-5 h-5" box="0 0 20 20">
          <path d="M3 3l14 14M17 3L3 17" stroke="#6c1018" strokeWidth="6" />
          <path d="M3 3l14 14M17 3L3 17" stroke="#dc2834" strokeWidth="4" />
        </Svg>
      </button>
      <section className="mt-5 mr-[1px] ml-1 border border-[#8a8c98]">
        <h3 className="flex h-7 items-center justify-between bg-linear-to-b from-[#e8e9ee] to-[#b4b8c0] pr-2 pl-[6px] text-[15px] font-bold text-[#4c4e58]">
          Message
          <button aria-label="Collapse message">
            <Svg size="w-[14px] h-[14px]" box="0 0 14 14">
              <path d="M2 7l5-5 5 5M2 13l5-5 5 5" stroke="#4c4e58" strokeWidth="1.600" />
            </Svg>
          </button>
        </h3>
        <div className="border-t border-[#a0a27c] bg-[#fdf25e] pt-1 pr-1 pb-[14px] pl-[13px] text-[16px] leading-[19px] text-[#44380c]">
          <p>Select:</p>
          <p>1) a plane, a planar face, or an edge on which to create a sketch for the entity</p>
          <p className="py-[19px]">or</p>
          <p>2) an existing sketch to add the entity to that sketch.</p>
        </div>
      </section>
      <button
        aria-label="Collapse panel"
        className="absolute top-[611px] -right-[14px] z-10 flex h-[42px] w-4 flex-col items-end justify-center gap-[5px] rounded-r-md border-2 border-l-0 border-[#70728a] bg-[#e6e7ef] pr-[3px]"
      >
        {[0, 1, 2].map((n) => (
          <Svg key={n} size="w-[5px] h-[7px]" box="0 0 5 7">
            <path d="M5 0v7L0 3.500z" fill="#5a5c6c" />
          </Svg>
        ))}
      </button>
    </aside>
  );
}

/* ---------- graphics area ---------- */

const treeItems: [string, ReactNode, string, boolean][] = [
  ['Sensors', <SensorsIcon />, 'text-[#22222c]', false],
  ['Anotaciones', <NotesIcon />, 'text-[#22222c]', true],
  ['Material <not specified>', <MaterialIcon />, 'text-[#22222c]', false],
  ['Alzado', <PlaneIcon />, 'text-[#f0914a]', false],
  ['Planta', <PlaneIcon />, 'text-[#22222c]', false],
  ['Vista lateral', <PlaneIcon />, 'text-[#22222c]', false],
  ['Origen', <OriginIcon />, 'text-[#22222c]', false],
  ['(-) 3DSketch1', <Sketch3DIcon />, 'text-[#22222c]', false],
  ['Plane2', <PlaneIcon />, 'text-[#22222c]', false],
  ['Loft3', <LoftIcon />, 'text-[#22222c]', true],
  ['Plane3', <PlaneIcon fill="#5cb0f4" />, 'text-[#3ce4f0]', false],
];

function Toggle({ open }: { open: boolean }) {
  return (
    <button aria-label={open ? 'Collapse' : 'Expand'} className="shrink-0">
      <Svg size="w-3 h-3" box="0 0 12 12">
        <rect x=".5" y=".5" width="11" height="11" fill="#d4d5de" stroke="#5c5c68" />
        <path d={open ? 'M3 6h6' : 'M3 6h6M6 3v6'} stroke="#111118" strokeWidth="1.600" />
      </Svg>
    </button>
  );
}

function Tree() {
  return (
    <div className="relative w-[300px] pt-1 pl-[3px] text-[17px] leading-[26px]">
      <div className="flex h-[26px] items-center text-[#22222c]">
        <Toggle open />
        <div className="h-px w-2 bg-[#6c6c78]" />
        <PartIcon />
        <span className="pt-1 pl-2 whitespace-pre">OperaBasicas  (Predetermin...</span>
      </div>
      <ul>
        {treeItems.map(([label, icon, tone, branch], i) => (
          <li key={label} className="flex h-[26px] items-center">
            <div className="flex w-[50px] shrink-0 items-center self-stretch pl-[33px]">
              <div className={`w-px shrink-0 bg-[#6c6c78] ${i === treeItems.length - 1 ? 'mb-[13px] h-[13px]' : 'h-[26px]'}`} />
              {branch ? (
                <div className="-ml-[7px] flex items-center">
                  <Toggle open={false} />
                  <div className="h-px w-2 bg-[#6c6c78]" />
                </div>
              ) : (
                <div className="h-px w-[14px] bg-[#6c6c78]" />
              )}
            </div>
            {icon}
            <span className={`pt-1 pl-[6px] whitespace-nowrap ${tone}`}>{label}</span>
          </li>
        ))}
      </ul>
    </div>
  );
}

const BODY = 'M835 622L813 885C813 897 818 902 829 908L1242 1146C1265 1159 1299 1159 1322 1147L1658 953C1667 947 1672 940 1671 927L1650 622z';

function Scene() {
  return (
    <svg viewBox="289 181 1744 1293" preserveAspectRatio="xMinYMin meet" className="absolute inset-0 h-full w-full" fill="none" aria-label="Isometric view of the loft">
      <defs>
        <linearGradient id="side" x1="813" x2="1671" y1="0" y2="0" gradientUnits="userSpaceOnUse">
          <stop offset="0" stopColor="#626673" />
          <stop offset=".1" stopColor="#5a5c68" />
          <stop offset=".3" stopColor="#555461" />
          <stop offset=".45" stopColor="#575864" />
          <stop offset=".55" stopColor="#5a5e69" />
          <stop offset=".75" stopColor="#5a5d68" />
          <stop offset="1" stopColor="#5f6470" />
        </linearGradient>
        <clipPath id="bodyClip">
          <path d={BODY} />
        </clipPath>
      </defs>
      <path d={BODY} fill="url(#side)" stroke="#16161e" strokeWidth="1.600" />
      <ellipse cx="1242.500" cy="622.500" rx="407.500" ry="235.500" fill="#7e7f94" stroke="#16161e" strokeWidth="1.600" />
      <path d="M924.500 425L1559 790v316L924.500 741z" stroke="#f88a1c" strokeWidth="2.400" />
      <path d="M471.500 687L1106 1052v315L471.500 1001z" stroke="#4a46e0" strokeWidth="2" />
      <path d="M471.500 687L1106 1052v315L471.500 1001z" stroke="#2412a8" strokeWidth="2" clipPath="url(#bodyClip)" />
      <text transform="translate(474 714) skewY(30)" fontFamily="Lato, sans-serif" fontWeight="700" fontSize="29" fill="#4038e0">
        Plane3
      </text>
      <g strokeWidth="5">
        <path d="M348 1390v-22" stroke="#1c6424" />
        <path d="M348 1354l7 11-7 5-7-5z" fill="#1c7428" />
        <path d="M348 1390l22 11" stroke="#b41c1c" />
        <path d="M381 1407l-15 1 3-7 4-6z" fill="#d82c2c" />
        <path d="M348 1390l-20 10" stroke="#1c1cac" />
        <path d="M317 1408l8-12 6 6v6z" fill="#1818b8" />
      </g>
      <g fontFamily="Open Sans, sans-serif" fontSize="17" textAnchor="middle">
        <text x="348" y="1353" fill="#2c7434">Y</text>
        <text x="312" y="1416" fill="#2c2cc8">Z</text>
        <text x="383" y="1415" fill="#e84444">X</text>
      </g>
      <text x="306" y="1466" fontFamily="Lato, sans-serif" fontWeight="700" fontSize="20" fill="#2c2c58">
        *Isometric
      </text>
      <g opacity=".75" strokeLinecap="square">
        <path d="M1924 219l35 35M1959 219l-35 35" stroke="#bc9ca8" strokeWidth="10" />
        <path d="M1924 219l35 35M1959 219l-35 35" stroke="#e0a6ac" strokeWidth="6" />
      </g>
    </svg>
  );
}

const taskTabs: [string, ReactNode][] = [
  ['Resources', <HomeIcon />],
  ['Design library', <LibraryIcon />],
  ['File explorer', <FolderIcon />],
  ['Search', <SearchCubeIcon />],
  ['View palette', <PaletteIcon />],
  ['Appearances', <BallIcon />],
  ['Custom properties', <CardIcon />],
];

function TaskPane() {
  return (
    <div className="absolute top-[58px] -right-[7px] z-10 flex flex-col">
      {taskTabs.map(([label, icon], i) => (
        <button
          key={label}
          aria-label={label}
          className={`flex h-[35px] w-[34px] items-center justify-center rounded-l-md border-2 border-r-0 border-[#8c8ea4] ${i === 0 ? 'bg-[#f2f2f8]' : 'bg-[#c2c4d0]'}`}
        >
          {icon}
        </button>
      ))}
    </div>
  );
}

/* ---------- bottom bars ---------- */

const navPaths: [string, string][] = [
  ['First', 'M3 2v12M13 2v12L5 8z'],
  ['Previous', 'M12 2v12L4 8z'],
  ['Next', 'M5 2v12l8-6z'],
  ['Last', 'M13 2v12M3 2v12l8-6z'],
];

function StudyTabs() {
  return (
    <div className="flex h-[22px] shrink-0 border-t-2 border-[#22242e] bg-[#e0e2ee] font-['Liberation_Sans'] text-[17px] leading-[18px] text-[#33343e]">
      <div className="flex gap-px border-r-[5px] border-[#eef0f6] pl-[3px]">
        {navPaths.map(([label, d]) => (
          <button key={label} disabled aria-label={label} className="flex w-[22px] items-center justify-center border border-[#8c8ea0] bg-[#a9abba]">
            <Svg size="w-3 h-3" box="0 0 16 16">
              <path d={d} fill="#80839a" stroke="#80839a" strokeWidth="1.500" />
            </Svg>
          </button>
        ))}
      </div>
      <button className="w-[82px] border-r-2 border-b-2 border-[#6a6c7e] bg-[#dfe1ea] font-bold">Model</button>
      <button className="w-[149px] border-r-2 border-b-2 border-[#6a6c7e] bg-[#bdbfcc] pr-2">Motion Study 1</button>
    </div>
  );
}

function StatusBar() {
  return (
    <footer className="flex h-[30px] shrink-0 items-center border-t-2 border-b-2 border-[#7a7c8a] bg-linear-to-b from-[#d6d8e4] to-[#b8bac8] pt-[2px] pl-[3px] text-[17px] leading-6 text-[#2c2c3c]">
      <span>SolidWorks Student Edition - Academic Use Only</span>
      <span className="ml-auto border-x border-[#d6d8e2] px-3 leading-5">Editing Part</span>
      <span className="mr-[115px] h-4 w-3 border-r border-[#d6d8e2]" />
      <button aria-label="Tags" className="mr-5">
        <TagIcon />
      </button>
    </footer>
  );
}

export default function App() {
  return (
    <div className="flex h-screen flex-col bg-[#cc0096] pt-[3px] pr-2 pb-[11px] pl-[9px] font-['DejaVu_Sans_Condensed','DejaVu_Sans',sans-serif]">
      <TitleBar />
      <Ribbon />
      <div className="flex min-h-0 flex-1 border-t-2 border-[#62647a] bg-[#72768a]">
        <div className="relative flex min-w-0 flex-1 flex-col border-r-2 border-[#1c1e2a]">
          <TabRow />
          <div className="flex min-h-0 flex-1">
            <PropertyPane />
            <main className="relative min-w-0 flex-1 bg-[#c6c8d4]">
              <Scene />
              <Tree />
              <TaskPane />
            </main>
          </div>
          <StudyTabs />
        </div>
        <div className="w-[5px] shrink-0" />
      </div>
      <StatusBar />
    </div>
  );
}
